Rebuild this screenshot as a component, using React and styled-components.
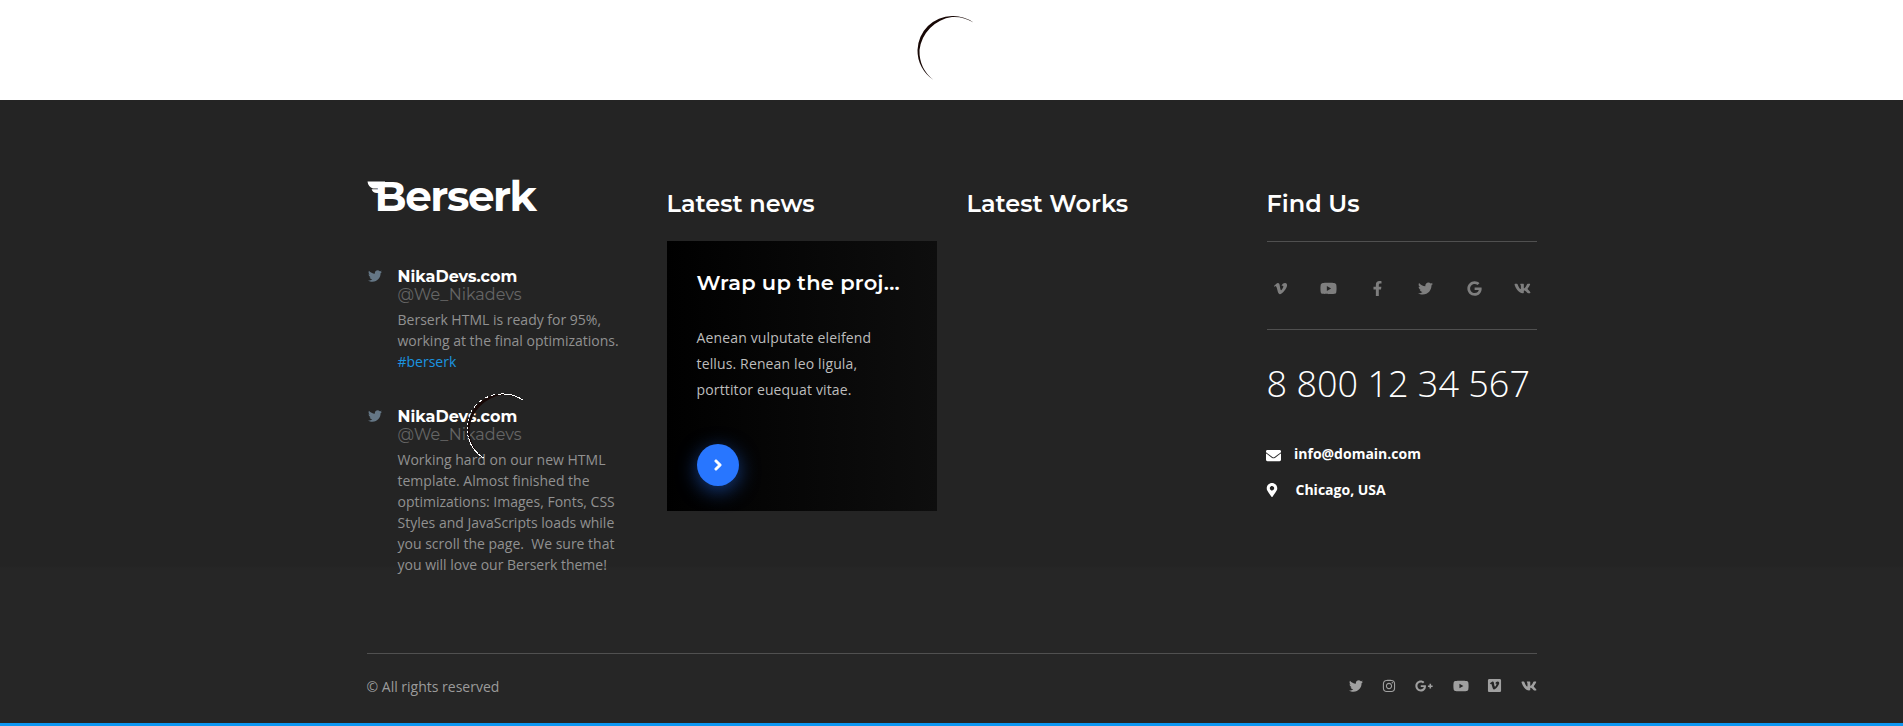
import React from "react";
import styled, { createGlobalStyle } from "styled-components";
import {
  FaTwitter, FaInstagram, FaGooglePlusG, FaYoutube, FaVimeoSquare, FaVk,
  FaVimeoV, FaFacebookF, FaGoogle, FaEnvelope, FaMapMarkerAlt, FaChevronRight,
} from "react-icons/fa";

const GlobalStyle = createGlobalStyle`
  * { box-sizing: border-box; }
  body {
    margin: 0;
    background: #fff;
    font-family: "Open Sans", "Liberation Sans", sans-serif;
    overflow: hidden;
  }
  h1, h2, h3, p { margin: 0; }
  a { color: inherit; text-decoration: none; }
`;

const display = `font-family: Montserrat, Inter, "Liberation Sans", sans-serif;`;

const LoaderStrip = styled.div`
  height: 100px;
  display: flex;
  justify-content: center;
  align-items: flex-start;
`;

const LoaderArt = styled.svg`
  display: block;
  width: 100px;
  height: 100px;
`;

const Footer = styled.footer`
  position: relative;
  height: 626px;
  background: linear-gradient(#242424, #242424 466px, #262626 468px, #262626);
  border-bottom: 3px solid #0d97f2;
`;

const Container = styled.div`
  width: 1170px;
  margin: 0 auto;
`;

const Columns = styled.div`
  display: grid;
  grid-template-columns: repeat(4, 270px);
  column-gap: 30px;
  height: 553px;
`;

const Column = styled.section`
  padding-top: ${(p) => p.$top}px;
`;

const Brand = styled.a`
  display: flex;
  width: 172px;
  height: 40px;
  color: #fff;
`;

const Wing = styled.svg`
  flex: none;
  width: 18px;
  height: 40px;
  margin-right: -10px;
`;

const BrandName = styled.span`
  ${display}
  font-size: 42px;
  line-height: 32px;
  font-weight: 700;
  letter-spacing: -1.4px;
  white-space: nowrap;
`;

const Heading = styled.h2`
  ${display}
  font-size: 24px;
  line-height: 30px;
  font-weight: 600;
  color: #fff;
  margin-bottom: 22px;
  white-space: nowrap;
`;

const Tweet = styled.article`
  display: grid;
  grid-template-columns: 31px 1fr;
  margin-top: ${(p) => p.$gap}px;
`;

const TweetIcon = styled.span`
  color: #657786;
  font-size: 14px;
  line-height: 0;
  padding: 1px 0 0 1px;
`;

const TweetName = styled.h3`
  ${display}
  font-size: 16px;
  line-height: 18px;
  font-weight: 700;
  color: #fff;
`;

const TweetHandle = styled.p`
  ${display}
  font-size: 16px;
  line-height: 18px;
  font-weight: 400;
  color: #666;
  margin-bottom: 5px;
`;

const TweetText = styled.p`
  font-size: 14px;
  line-height: 21px;
  color: #919191;
  white-space: pre;
`;

const Tag = styled.a`
  color: #1b95e0;
`;

const Card = styled.article`
  width: 270px;
  height: 270px;
  padding: 29px 30px;
  background: linear-gradient(90deg, #000, #0e0e0e);
`;

const CardTitle = styled.h3`
  ${display}
  font-size: 21px;
  line-height: 25px;
  font-weight: 600;
  letter-spacing: 0.24px;
  color: #fff;
  white-space: nowrap;
`;

const CardText = styled.p`
  margin-top: 30px;
  font-size: 14px;
  line-height: 26px;
  letter-spacing: 0.14px;
  color: #bdbdbd;
  white-space: pre;
`;

const RoundButton = styled.a`
  display: flex;
  align-items: center;
  justify-content: center;
  width: 42px;
  height: 42px;
  margin-top: 41px;
  border-radius: 50%;
  background: #2876ff;
  color: #fff;
  font-size: 12px;
  box-shadow: 0 5px 20px rgba(40, 118, 255, 0.5);

  path {
    stroke: currentColor;
    stroke-width: 44px;
  }
`;

const SocialBar = styled.nav`
  height: 89px;
  padding: 5px 0 0;
  border-top: 1px solid #505050;
  border-bottom: 1px solid #505050;
  display: flex;
  align-items: center;
  justify-content: space-between;
  color: #7e7e7e;
`;

const SocialLink = styled.a`
  width: 28px;
  display: flex;
  justify-content: center;
  font-size: ${(p) => p.$size || 15}px;
`;

const Phone = styled.p`
  margin-top: 29px;
  font-size: 36px;
  line-height: 49px;
  font-weight: 300;
  color: #fff;
  white-space: nowrap;
`;

const Contact = styled.a`
  display: flex;
  align-items: center;
  height: 20px;
  margin-top: ${(p) => p.$gap}px;
  font-size: 14px;
  line-height: 20px;
  font-weight: 700;
  color: #fff;
`;

const ContactIcon = styled.span`
  width: ${(p) => p.$width}px;
  margin-left: ${(p) => p.$shift}px;
  padding-top: ${(p) => p.$drop}px;
  font-size: ${(p) => p.$size}px;
  line-height: 0;
`;

const BottomBar = styled.div`
  height: 70px;
  padding-top: 23px;
  border-top: 1px solid #505050;
  display: flex;
  justify-content: space-between;
`;

const Copyright = styled.p`
  font-size: 14px;
  line-height: 20px;
  color: #9b9b9b;
`;

const BottomLinks = styled.nav`
  display: flex;
  align-items: center;
  height: 17px;
  color: #a0a0a0;
`;

const BottomLink = styled.a`
  display: flex;
  margin-left: ${(p) => p.$gap}px;
  font-size: ${(p) => p.$size || 14}px;
`;

const FloatingLoader = styled.div`
  position: absolute;
  left: 451.5px;
  top: 278px;
`;

const crescent =
  "M71.5 22.5A35 35 0 0 0 50 16A35 35 0 0 0 15.5 50A35 35 0 0 0 31.5 80A37 37 0 0 1 17.5 50A38 38 0 0 1 50 17A36 36 0 0 1 71.5 22.5Z";

function Loader({ fringe }) {
  return (
    <LoaderArt viewBox="0 0 100 100">
      <path d={crescent} fill="#180806" />
      {fringe && (
        <g fill="none" stroke="#fff" strokeWidth="1" shapeRendering="crispEdges">
          <path d="M71.5 22.5A35 35 0 0 0 50 16" />
          <path d="M50 16A35 35 0 0 0 19 34" strokeDasharray="4 3" />
          <path d="M16.5 41A35 35 0 0 0 16.5 60" strokeDasharray="2 2" />
          <path d="M16.5 60A35 35 0 0 0 31.5 80" />
        </g>
      )}
    </LoaderArt>
  );
}

const tweets = [
  { gap: 48, text: "Berserk HTML is ready for 95%,\nworking at the final optimizations.\n", tag: "#berserk" },
  {
    gap: 36,
    text:
      "Working hard on our new HTML\ntemplate. Almost finished the\noptimizations: Images, Fonts, CSS\nStyles and JavaScripts loads while\nyou scroll the page.  We sure that\nyou will love our Berserk theme!",
  },
];

export default function App() {
  return (
    <>
      <GlobalStyle />
      <LoaderStrip><Loader /></LoaderStrip>
      <Footer>
        <Container>
          <Columns>
            <Column $top={80}>
              <Brand href="#">
                <Wing viewBox="0 0 18 40">
                  <path d="M0.5 1.5H18V6.5H14V13H10C7 12.7 5.2 11.5 4.6 9.2H11V8.4H6C3 7.6 0.8 5 0.5 1.5Z" fill="#fff" />
                </Wing>
                <BrandName>Berserk</BrandName>
              </Brand>
              {tweets.map((t) => (
                <Tweet key={t.gap} $gap={t.gap}>
                  <TweetIcon><FaTwitter /></TweetIcon>
                  <div>
                    <TweetName>NikaDevs.com</TweetName>
                    <TweetHandle>@We_Nikadevs</TweetHandle>
                    <TweetText>{t.text}{t.tag && <Tag href="#">{t.tag}</Tag>}</TweetText>
                  </div>
                </Tweet>
              ))}
            </Column>
            <Column $top={89}>
              <Heading>Latest news</Heading>
              <Card>
                <CardTitle>Wrap up the proj...</CardTitle>
                <CardText>{"Aenean vulputate eleifend\ntellus. Renean leo ligula,\nporttitor euequat vitae."}</CardText>
                <RoundButton href="#"><FaChevronRight /></RoundButton>
              </Card>
            </Column>
            <Column $top={89}>
              <Heading>Latest Works</Heading>
            </Column>
            <Column $top={89}>
              <Heading>Find Us</Heading>
              <SocialBar>
                <SocialLink><FaVimeoV /></SocialLink>
                <SocialLink $size={17}><FaYoutube /></SocialLink>
                <SocialLink><FaFacebookF /></SocialLink>
                <SocialLink><FaTwitter /></SocialLink>
                <SocialLink><FaGoogle /></SocialLink>
                <SocialLink $size={17}><FaVk /></SocialLink>
              </SocialBar>
              <Phone>8 800 12 34 567</Phone>
              <Contact $gap={36}><ContactIcon $width={28} $shift={-0.5} $drop={3} $size={15}><FaEnvelope /></ContactIcon>info@domain.com</Contact>
              <Contact $gap={16}><ContactIcon $width={31} $shift={-2} $drop={0} $size={14}><FaMapMarkerAlt /></ContactIcon>Chicago, USA</Contact>
            </Column>
          </Columns>
          <BottomBar>
            <Copyright>© All rights reserved</Copyright>
            <BottomLinks>
              <BottomLink><FaTwitter /></BottomLink>
              <BottomLink $gap={19}><FaInstagram /></BottomLink>
              <BottomLink $gap={19} $size={18}><FaGooglePlusG /></BottomLink>
              <BottomLink $gap={20} $size={16}><FaYoutube /></BottomLink>
              <BottomLink $gap={18} $size={15}><FaVimeoSquare /></BottomLink>
              <BottomLink $gap={19} $size={16}><FaVk /></BottomLink>
            </BottomLinks>
          </BottomBar>
        </Container>
        <FloatingLoader><Loader fringe /></FloatingLoader>
      </Footer>
    </>
  );
}
